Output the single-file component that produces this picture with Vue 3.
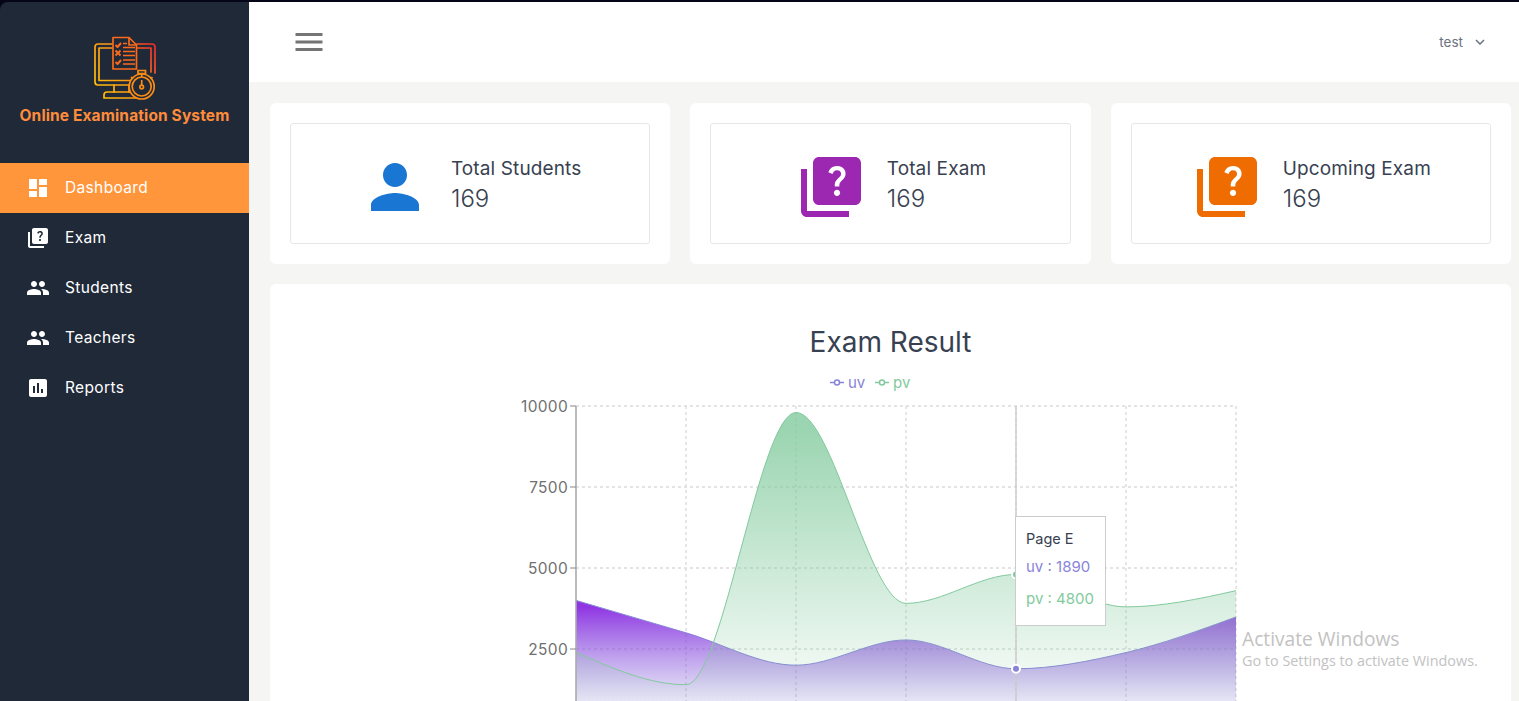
<template>
  <div class="shell">
    <aside class="sidebar">
      <div class="brand">
        <svg class="brand-logo" width="64" height="64" viewBox="0 0 64 64" fill="none">
          <defs>
            <linearGradient id="logoGrad" gradientUnits="userSpaceOnUse" x1="0" y1="52" x2="64" y2="12">
              <stop offset="0" stop-color="#ffc107" />
              <stop offset="0.55" stop-color="#ff9118" />
              <stop offset="1" stop-color="#ee2b2b" />
            </linearGradient>
          </defs>
          <g stroke="url(#logoGrad)" stroke-width="1.700" stroke-linejoin="round" stroke-linecap="round">
            <path d="M19 8H5Q2 8 2 11V46Q2 49 5 49H36" />
            <path d="M44 8H59Q62 8 62 11V37" />
            <path d="M19 12H6V44.500H37" />
            <path d="M44 12H58V36" />
            <path d="M21 49V56M36 49V56" />
            <path d="M37 56H14Q11 56 11 59V62H44" />
          </g>
          <g stroke="#f96a1c" stroke-width="1.700" stroke-linejoin="round">
            <path d="M20 1.500H36L43.500 9V33H20Z" fill="#202938" />
            <path d="M36 1.500V9H43.500" />
            <path d="M22.500 9l2 2 3.500-4M22.500 26l2 2 3.500-4M22.500 14.500l5 5M27.500 14.500l-5 5" stroke-width="2" />
            <path d="M30 7.500H34M30 11.500H42M30 15.500H42M30 19.500H42M30 24H42M30 28H42" />
          </g>
          <g stroke="#fb8c14" stroke-width="1.700" fill="none">
            <circle cx="48.700" cy="50.500" r="12.500" fill="#202938" />
            <circle cx="48.700" cy="50.500" r="9.500" />
            <path d="M45 34.500H52.500V37.500H45ZM48.700 37.500V41M38 41l2 2M59.500 41l-2 2" />
            <path d="M48.700 44V49" />
            <circle cx="48.700" cy="51" r="1.800" />
          </g>
        </svg>
        <div class="brand-name">Online Examination System</div>
      </div>
      <nav class="nav">
        <a v-for="item in navItems" :key="item.label" class="nav-item" :class="{ active: item.active }">
          <svg width="24" height="24" viewBox="0 0 24 24" fill="#fff"><path :d="item.icon" /></svg>
          <span class="nav-label">{{ item.label }}</span>
        </a>
      </nav>
    </aside>

    <div class="main">
      <header class="topbar">
        <svg width="36" height="36" viewBox="0 0 24 24" fill="#757575"><path d="M3 18h18v-2H3v2zm0-5h18v-2H3v2zm0-7v2h18V6H3z" /></svg>
        <div class="user">
          <span>test</span>
          <svg width="10" height="6" viewBox="0 0 10 6" fill="none" stroke="#6b7280" stroke-width="1.500"><path d="M1 1l4 4 4-4" /></svg>
        </div>
      </header>

      <div class="content">
        <div class="stats">
          <div v-for="stat in stats" :key="stat.label" class="stat-card">
            <div class="stat-box">
              <svg class="stat-icon" width="72" height="72" viewBox="0 0 24 24" :fill="stat.color"><path :d="stat.icon" /></svg>
              <div class="stat-text">
                <div class="stat-label">{{ stat.label }}</div>
                <div class="stat-value">{{ stat.value }}</div>
              </div>
            </div>
          </div>
        </div>

        <div class="chart-card">
          <h2 class="chart-title">Exam Result</h2>
          <div class="chart-wrap">
            <svg width="761" height="370" viewBox="0 0 761 370">
              <defs>
                <linearGradient id="uvFill" x1="0" y1="0" x2="0" y2="1">
                  <stop offset="5%" stop-color="#8a2be2" stop-opacity="0.95" />
                  <stop offset="95%" stop-color="#8884d8" stop-opacity="0" />
                </linearGradient>
                <linearGradient id="pvFill" x1="0" y1="0" x2="0" y2="1">
                  <stop offset="5%" stop-color="#82ca9d" stop-opacity="0.8" />
                  <stop offset="95%" stop-color="#82ca9d" stop-opacity="0" />
                </linearGradient>
              </defs>

              <g class="legend">
                <path d="M320 10.500H334" stroke="#8884d8" stroke-width="1.500" />
                <circle cx="327" cy="10.500" r="2.500" fill="#fff" stroke="#8884d8" stroke-width="1.500" />
                <text x="338" y="15.500" fill="#8884d8">uv</text>
                <path d="M365 10.500H379" stroke="#82ca9d" stroke-width="1.500" />
                <circle cx="372" cy="10.500" r="2.500" fill="#fff" stroke="#82ca9d" stroke-width="1.500" />
                <text x="383" y="15.500" fill="#82ca9d">pv</text>
              </g>

              <g stroke="#dcdcdc" stroke-dasharray="3 3" stroke-width="1.400">
                <line v-for="x in gridX" :key="'x' + x" :x1="x" :x2="x" y1="34" y2="370" />
                <line v-for="t in ticks" :key="'y' + t" x1="66" x2="726" :y1="toY(t)" :y2="toY(t)" />
              </g>

              <path :d="areaPath(uv)" fill="url(#uvFill)" />
              <path :d="linePath(uv)" fill="none" stroke="#8884d8" />
              <path :d="areaPath(pv)" fill="url(#pvFill)" />
              <path :d="linePath(pv)" fill="none" stroke="#82ca9d" />

              <line x1="66" x2="66" y1="34" y2="370" stroke="#aaa" stroke-width="1.600" />
              <g v-for="t in ticks" :key="'t' + t">
                <line x1="60" x2="66" :y1="toY(t)" :y2="toY(t)" stroke="#888" />
                <text class="tick" x="58" :y="toY(t) + 5.500" text-anchor="end">{{ t }}</text>
              </g>

              <line x1="506" x2="506" y1="34" y2="370" stroke="#ccc" stroke-width="1.500" />
              <circle cx="506" :cy="toY(4800)" r="4" fill="#82ca9d" stroke="#fff" stroke-width="2" />
              <circle cx="506" :cy="toY(1890)" r="4" fill="#8884d8" stroke="#fff" stroke-width="2" />
            </svg>

            <div class="tooltip">
              <div class="tooltip-title">Page E</div>
              <div class="tooltip-row uv">uv : 1890</div>
              <div class="tooltip-row pv">pv : 4800</div>
            </div>
          </div>
        </div>
      </div>
    </div>

    <div class="watermark">
      <div class="wm-title">Activate Windows</div>
      <div class="wm-sub">Go to Settings to activate Windows.</div>
    </div>
  </div>
</template>

<script setup>
const quizIcon = 'M4 6H2v14c0 1.1.9 2 2 2h14v-2H4V6zm16-4H8c-1.1 0-2 .9-2 2v12c0 1.1.9 2 2 2h12c1.1 0 2-.9 2-2V4c0-1.1-.9-2-2-2zm-5.99 13c-.59 0-1.05-.47-1.05-1.05 0-.59.47-1.04 1.05-1.04.59 0 1.04.45 1.04 1.04-.01.58-.45 1.05-1.04 1.05zm2.5-6.17c-.63.93-1.23 1.21-1.56 1.81-.13.24-.18.4-.18 1.18h-1.52c0-.41-.06-1.08.26-1.65.41-.73 1.18-1.16 1.63-1.8.48-.68.21-1.94-1.14-1.94-.88 0-1.32.67-1.5 1.23l-1.37-.57C11.51 5.96 12.52 5 13.99 5c1.23 0 2.08.56 2.51 1.26.37.61.58 1.73.01 2.57z'
const peopleIcon = 'M16 11c1.66 0 2.99-1.34 2.99-3S17.66 5 16 5c-1.66 0-3 1.34-3 3s1.34 3 3 3zm-8 0c1.66 0 2.99-1.34 2.99-3S9.66 5 8 5C6.34 5 5 6.34 5 8s1.34 3 3 3zm0 2c-2.33 0-7 1.17-7 3.5V19h14v-2.5c0-2.33-4.67-3.5-7-3.5zm8 0c-.29 0-.62.02-.97.05 1.16.84 1.97 1.97 1.97 3.45V19h6v-2.5c0-2.33-4.67-3.5-7-3.5z'

const navItems = [
  { label: 'Dashboard', active: true, icon: 'M3 13h8V3H3v10zm0 8h8v-6H3v6zm10 0h8V11h-8v10zm0-18v6h8V3h-8z' },
  { label: 'Exam', icon: quizIcon },
  { label: 'Students', icon: peopleIcon },
  { label: 'Teachers', icon: peopleIcon },
  { label: 'Reports', icon: 'M19 3H5c-1.1 0-2 .9-2 2v14c0 1.1.9 2 2 2h14c1.1 0 2-.9 2-2V5c0-1.1-.9-2-2-2zM9 17H7v-7h2v7zm4 0h-2V7h2v10zm4 0h-2v-4h2v4z' }
]

const stats = [
  { label: 'Total Students', value: 169, color: '#1976d2', icon: 'M12 12c2.21 0 4-1.79 4-4s-1.79-4-4-4-4 1.79-4 4 1.79 4 4 4zm0 2c-2.67 0-8 1.34-8 4v2h16v-2c0-2.66-5.33-4-8-4z' },
  { label: 'Total Exam', value: 169, color: '#9c27b0', icon: quizIcon },
  { label: 'Upcoming Exam', value: 169, color: '#ef6c00', icon: quizIcon }
]

const uv = [4000, 3000, 2000, 2780, 1890, 2390, 3490]
const pv = [2400, 1398, 9800, 3908, 4800, 3800, 4300]
const ticks = [10000, 7500, 5000, 2500]
const gridX = [176, 286, 396, 506, 616, 726]

const toX = (i) => 66 + i * 110
const toY = (v) => 358 - (v * 81) / 2500

// same monotone interpolation the chart library uses
function tangents(ys) {
  const h = 110
  const pts = ys.map(toY)
  const t = pts.map((y, i) => {
    if (i === 0 || i === pts.length - 1) return 0
    const s0 = (y - pts[i - 1]) / h
    const s1 = (pts[i + 1] - y) / h
    const p = (s0 + s1) / 2
    return (Math.sign(s0) + Math.sign(s1)) * Math.min(Math.abs(s0), Math.abs(s1), 0.5 * Math.abs(p))
  })
  t[0] = (3 * (pts[1] - pts[0]) / h - t[1]) / 2
  const n = pts.length - 1
  t[n] = (3 * (pts[n] - pts[n - 1]) / h - t[n - 1]) / 2
  return t
}

function linePath(ys) {
  const t = tangents(ys)
  const d3 = 110 / 3
  let d = `M${toX(0)} ${toY(ys[0])}`
  for (let i = 1; i < ys.length; i++) {
    const x0 = toX(i - 1)
    const x1 = toX(i)
    const y0 = toY(ys[i - 1])
    const y1 = toY(ys[i])
    d += `C${x0 + d3} ${y0 + d3 * t[i - 1]} ${x1 - d3} ${y1 - d3 * t[i]} ${x1} ${y1}`
  }
  return d
}

function areaPath(ys) {
  return `${linePath(ys)}L${toX(ys.length - 1)} ${toY(0)}L${toX(0)} ${toY(0)}Z`
}
</script>

<style scoped>
.shell {
  position: relative;
  display: flex;
  height: 699px;
  border-top: 2px solid #05051a;
  background: #05051a;
  overflow: hidden;
  font-family: Inter, "Liberation Sans", sans-serif;
}

.sidebar {
  flex: 0 0 249px;
  background: #202938;
  border-top-left-radius: 8px;
}

.brand {
  display: flex;
  flex-direction: column;
  align-items: center;
  padding-top: 34px;
  height: 161px;
  box-sizing: border-box;
}

.brand-logo {
  margin-left: 1px;
}

.brand-name {
  margin-top: 6px;
  font-size: 15.5px;
  font-weight: 700;
  letter-spacing: 0.13px;
  color: #ff8c3a;
  white-space: nowrap;
}

.nav-item {
  display: flex;
  align-items: center;
  gap: 15px;
  height: 50px;
  padding-left: 26px;
  color: #fff;
  font-size: 15.5px;
}

.nav-label {
  padding-bottom: 2px;
  letter-spacing: 0.35px;
}

.nav-item.active {
  background: #ff963c;
}

.main {
  flex: 1;
  min-width: 0;
  background: #f5f5f3;
}

.topbar {
  display: flex;
  align-items: center;
  justify-content: space-between;
  height: 80px;
  padding: 0 34px 0 42px;
  background: #fff;
}

.user {
  display: flex;
  align-items: center;
  gap: 12px;
  font-size: 13.5px;
  color: #6b7280;
}

.content {
  padding: 21px 8px 0 21px;
}

.stats {
  display: grid;
  grid-template-columns: repeat(3, 1fr);
  gap: 20px;
}

.stat-card {
  padding: 20px;
  background: #fff;
  border-radius: 6px;
}

.stat-box {
  display: flex;
  align-items: center;
  justify-content: center;
  gap: 20px;
  height: 121px;
  box-sizing: border-box;
  border: 1px solid #e5e7eb;
  border-radius: 3px;
}

.stat-icon {
  margin-top: 7px;
}

.stat-text {
  padding-top: 2px;
  color: #374151;
}

.stat-label {
  font-size: 19px;
  line-height: 27px;
  letter-spacing: 0.12px;
}

.stat-value {
  font-size: 24px;
  line-height: 33px;
  font-weight: 300;
}

.chart-card {
  margin-top: 20px;
  height: 500px;
  background: #fff;
  border-radius: 6px 6px 0 0;
}

.chart-title {
  margin: 0;
  padding-top: 40px;
  text-align: center;
  font-size: 28px;
  line-height: 36px;
  font-weight: 400;
  color: #374151;
}

.chart-wrap {
  position: relative;
  width: 761px;
  margin: 12px auto 0;
}

.chart-wrap svg {
  display: block;
}

.legend text {
  font-size: 15px;
}

.tick {
  font-size: 15.5px;
  letter-spacing: 0.3px;
  fill: #707070;
}

.tooltip {
  position: absolute;
  left: 505px;
  top: 144px;
  width: 91px;
  height: 110px;
  box-sizing: border-box;
  padding: 13px 10px;
  background: #fff;
  border: 1px solid #ccc;
  font-size: 14.5px;
  color: #374151;
}

.tooltip-row {
  margin-top: 10px;
  font-size: 15px;
  white-space: nowrap;
}

.tooltip-row.uv {
  color: #8884d8;
}

.tooltip-row.pv {
  color: #82ca9d;
  margin-top: 13px;
}

.watermark {
  position: absolute;
  left: 1242px;
  top: 625px;
  color: #c2c2c2;
  font-family: "Open Sans", sans-serif;
  pointer-events: none;
}

.wm-title {
  font-size: 19.2px;
  line-height: 24px;
}

.wm-sub {
  font-size: 14.4px;
  line-height: 20px;
}
</style>

<style>
body {
  overflow: hidden;
}
</style>
